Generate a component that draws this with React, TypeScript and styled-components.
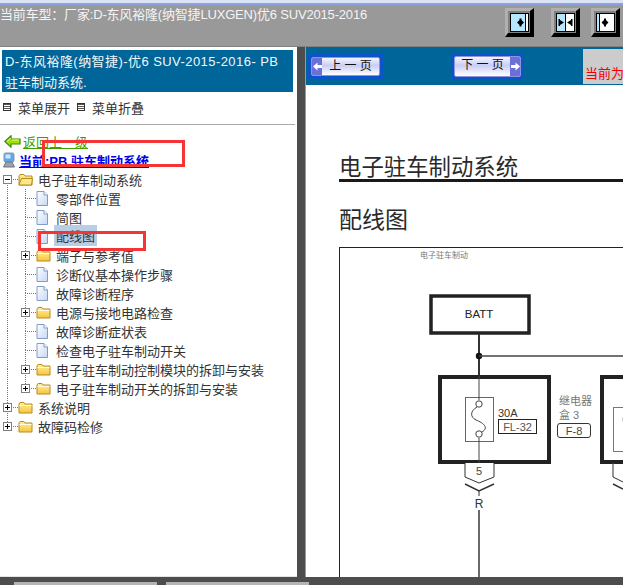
import React from "react";
import styled, { createGlobalStyle } from "styled-components";

const GlobalStyle = createGlobalStyle`
  html, body {
    margin: 0;
    padding: 0;
    overflow: hidden;
    background: #fff;
  }
`;

type TreeRow = {
  label: string;
  level: 0 | 1;
  kind: "file" | "open" | "closed";
  selected?: boolean;
  last?: boolean;
};

const rows: TreeRow[] = [
  { label: "电子驻车制动系统", level: 0, kind: "open" },
  { label: "零部件位置", level: 1, kind: "file" },
  { label: "简图", level: 1, kind: "file" },
  { label: "配线图", level: 1, kind: "file", selected: true },
  { label: "端子与参考值", level: 1, kind: "closed" },
  { label: "诊断仪基本操作步骤", level: 1, kind: "file" },
  { label: "故障诊断程序", level: 1, kind: "file" },
  { label: "电源与接地电路检查", level: 1, kind: "closed" },
  { label: "故障诊断症状表", level: 1, kind: "file" },
  { label: "检查电子驻车制动开关", level: 1, kind: "file" },
  { label: "电子驻车制动控制模块的拆卸与安装", level: 1, kind: "closed" },
  { label: "电子驻车制动开关的拆卸与安装", level: 1, kind: "closed", last: true },
  { label: "系统说明", level: 0, kind: "closed" },
  { label: "故障码检修", level: 0, kind: "closed", last: true },
];

function FolderIcon({ open }: { open: boolean }) {
  return (
    <FolderSvg viewBox="0 0 15 13">
      <defs>
        <linearGradient id="folderFill" x1="0" y1="0" x2="0" y2="1">
          <stop offset="0" stopColor="#fff0a0" />
          <stop offset="1" stopColor="#f5c63a" />
        </linearGradient>
      </defs>
      <path d="M1 3 L2 1.5 H6 L7 3 H14 V12 H1 Z" fill="url(#folderFill)" stroke="#b98a1e" />
      {open && <path d="M1 12 L3.5 5.5 H14.5 L13.5 12 Z" fill="#fde68c" stroke="#b98a1e" />}
      {!open && <path d="M1.5 4.5 H13.5" stroke="#fffbe0" />}
    </FolderSvg>
  );
}

function FileIcon() {
  return (
    <FileSvg viewBox="0 0 12 15">
      <defs>
        <linearGradient id="fileFill" x1="0" y1="0" x2="1" y2="1">
          <stop offset="0" stopColor="#ffffff" />
          <stop offset="1" stopColor="#c5d8f4" />
        </linearGradient>
      </defs>
      <path d="M1 .5 H8 L11.5 4 V14.5 H1 Z" fill="url(#fileFill)" stroke="#7f9cc8" />
      <path d="M8 .5 V4 H11.5" fill="#fff" stroke="#7f9cc8" />
    </FileSvg>
  );
}

function BackArrow() {
  return (
    <svg width="17" height="13" viewBox="0 0 17 13">
      <path
        d="M.8 6.5 L7 .8 V4 H16 V9 H7 V12.2 Z"
        fill="#9ee000"
        stroke="#3c8a00"
        strokeWidth="1.2"
      />
      <path d="M3 6.5 L7 3 M7.5 5 H15" stroke="#e4ff80" fill="none" />
    </svg>
  );
}

function ComputerIcon() {
  return (
    <svg width="14" height="17" viewBox="0 0 14 17">
      <rect x="2" y="1" width="10" height="9" rx="1.5" fill="#5aa8f0" stroke="#8d96a6" />
      <rect x="3.5" y="2.5" width="5" height="4" fill="#cfe8ff" />
      <path d="M4 10 L1.5 15 H12.5 L10 10 Z" fill="#9aa2ae" stroke="#70747c" />
    </svg>
  );
}

// both-way arrow head drawn around a centre x
const splitArrow = (x: number) =>
  `M${x - 1} 5.5 H${x + 1} V7 L${x + 3.5} 9.5 L${x + 1} 12 V13.5 H${x - 1} V12 L${x - 3.5} 9.5 L${x - 1} 7 Z`;

function ToolIcon({ variant }: { variant: 1 | 2 | 3 }) {
  return (
    <svg width="19" height="19" viewBox="0 0 19 19" style={{ display: "block" }}>
      <rect x=".5" y=".5" width="18" height="18" fill="#fff" stroke="#000" />
      {variant === 1 && (
        <>
          <rect x="1" y="1" width="14" height="17" fill="#b5e8ff" />
          <path d="M15.5 1 V18" stroke="#000" />
          <path d={splitArrow(10.5)} fill="#000" />
        </>
      )}
      {variant === 2 && (
        <>
          <rect x="1" y="1" width="8" height="17" fill="#b5e8ff" />
          <path d="M9.5 1 V18" stroke="#000" />
          <path
            d="M2.5 6 H4 V7 L8 9.5 L4 12 V13 H2.5 Z M16.5 6 H15 V7 L11 9.5 L15 12 V13 H16.5 Z"
            fill="#000"
          />
        </>
      )}
      {variant === 3 && (
        <>
          <rect x="1" y="1" width="2" height="17" fill="#b5e8ff" />
          <path d="M3.5 1 V18" stroke="#000" />
          <path d={splitArrow(9)} fill="#000" />
        </>
      )}
    </svg>
  );
}

function NavArrow({ right }: { right?: boolean }) {
  return (
    <svg width="9" height="9" viewBox="0 0 9 9">
      <path
        d={right ? "M9 4.5 L4.5 .5 V3 H0 V6 H4.5 V8.5 Z" : "M0 4.5 L4.5 .5 V3 H9 V6 H4.5 V8.5 Z"}
        fill="#fff"
      />
    </svg>
  );
}

function ExpanderGlyph({ open }: { open: boolean }) {
  return (
    <ExpanderSvg viewBox="0 0 9 9">
      <rect x=".5" y=".5" width="8" height="8" fill="#fff" stroke="#808080" />
      <path d={open ? "M2 4.5 H7" : "M2 4.5 H7 M4.5 2 V7"} stroke="#000" />
    </ExpanderSvg>
  );
}

function Diagram() {
  return (
    <DiagramSvg viewBox="339 247 284 330">
      <text x="420" y="258" fontSize="8" fill="#777">电子驻车制动</text>

      <rect x="431" y="296" width="98" height="37" fill="#fff" stroke="#222" strokeWidth="3.5" />
      <text x="479" y="318" fontSize="11.5" fill="#222" textAnchor="middle">BATT</text>
      <path d="M479 334 V376" stroke="#333" strokeWidth="2" />
      <circle cx="479" cy="356" r="3.2" fill="#111" />
      <path d="M479 356 H623" stroke="#444" strokeWidth="1.5" />

      <rect x="440" y="377" width="109" height="85" fill="#fff" stroke="#222" strokeWidth="4" />
      <rect x="465.5" y="397.5" width="28" height="44" fill="#fff" stroke="#666" />
      <path d="M479 376 V400 M479 438 V463" stroke="#444" />
      <circle cx="479" cy="404" r="3.2" fill="#fff" stroke="#444" />
      <circle cx="479" cy="434" r="3.2" fill="#fff" stroke="#444" />
      <path
        d="M477 407 C470 411 470 417 476 420 C484 423 489 428 482 432"
        fill="none"
        stroke="#444"
      />
      <text x="498" y="417" fontSize="11" fill="#333">30A</text>
      <rect x="498.5" y="419.5" width="38" height="14" fill="#fff" stroke="#222" />
      <text x="517.5" y="431" fontSize="11" fill="#555" textAnchor="middle">FL-32</text>

      <text x="559" y="405" fontSize="11" fill="#777">继电器</text>
      <text x="559" y="419" fontSize="11" fill="#777">盒 3</text>
      <rect x="557.5" y="423.5" width="33" height="14" rx="2.5" fill="#fff" stroke="#333" />
      <text x="574" y="435" fontSize="11" fill="#444" textAnchor="middle">F-8</text>

      <path d="M465 463 V477 L479 483 L494 477 V463" fill="#fff" stroke="#333" />
      <text x="479" y="474.5" fontSize="11" fill="#444" textAnchor="middle">5</text>
      <path d="M465 484 L479 491 L494 484" fill="none" stroke="#333" strokeWidth="1.5" />
      <path d="M479 491 V496" stroke="#333" />
      <text x="479" y="508" fontSize="12" fill="#333" textAnchor="middle">R</text>
      <path d="M479 510 V577" stroke="#444" strokeWidth="1.6" />

      <rect x="602" y="377" width="40" height="85" fill="#fff" stroke="#222" strokeWidth="4" />
      <rect x="613.5" y="407.5" width="30" height="44" fill="#fff" stroke="#777" />
      <path d="M627 413 C622 416 622 422 626 425" fill="none" stroke="#666" />
      <path d="M613 463 V477 L623 482" fill="#fff" stroke="#333" />
      <path d="M613 484 L623 489" fill="none" stroke="#333" strokeWidth="1.5" />
    </DiagramSvg>
  );
}

function App() {
  return (
    <Page>
      <GlobalStyle />
      <TitleStrip />
      <Toolbar>
        <CarTitle>当前车型：厂家:D-东风裕隆(纳智捷LUXGEN)优6 SUV2015-2016</CarTitle>
        <ToolButton $gap={0}>
          <ToolIcon variant={1} />
        </ToolButton>
        <ToolButton $gap={17}>
          <ToolIcon variant={2} />
        </ToolButton>
        <ToolButton $gap={11}>
          <ToolIcon variant={3} />
        </ToolButton>
      </Toolbar>

      <Main>
        <Sidebar>
          <SideTitle>
            <SideTitleLine>D-东风裕隆(纳智捷)-优6 SUV-2015-2016- PB</SideTitleLine>
            驻车制动系统.
          </SideTitle>
          <MenuRow>
            <MenuToggle />
            <MenuLabel>菜单展开</MenuLabel>
            <MenuToggle />
            <MenuLabel>菜单折叠</MenuLabel>
          </MenuRow>
          <Divider />
          <BackRow>
            <BackArrow />
            <BackLink>返回上一级</BackLink>
          </BackRow>
          <CurrentRow>
            <ComputerIcon />
            <CurrentLink>当前:PB 驻车制动系统</CurrentLink>
          </CurrentRow>
          <Tree>
            {rows.map((row) => (
              <Row key={row.label}>
                {row.level === 1 && <Guide $x={7} $up $down />}
                {row.kind === "file" ? (
                  <Guide $x={7} $up $down $branch />
                ) : (
                  <Guide
                    $x={7}
                    $up={row.level === 1 || row.label !== "电子驻车制动系统"}
                    $down={!row.last}
                    $branch
                  >
                    <ExpanderGlyph open={row.kind === "open"} />
                  </Guide>
                )}
                {row.kind === "file" ? <FileIcon /> : <FolderIcon open={row.kind === "open"} />}
                <RowLabel $selected={row.selected} $file={row.kind === "file"}>
                  {row.label}
                </RowLabel>
              </Row>
            ))}
          </Tree>
        </Sidebar>

        <Splitter />

        <Viewer>
          <ViewerBar>
            <NavFrame>
              <NavButton>
                <NavCap>
                  <NavArrow />
                </NavCap>
                <NavText>上 一 页</NavText>
              </NavButton>
            </NavFrame>
            <NavFrame $next>
              <NavButton>
                <NavText>下 一 页</NavText>
                <NavCap>
                  <NavArrow right />
                </NavCap>
              </NavButton>
            </NavFrame>
            <CurrentBox>当前为</CurrentBox>
          </ViewerBar>
          <Document>
            <DocTitle>电子驻车制动系统</DocTitle>
            <DocSubtitle>配线图</DocSubtitle>
            <DiagramFrame>
              <Diagram />
            </DiagramFrame>
          </Document>
        </Viewer>
      </Main>

      <BottomBar>
        <BottomTab />
        <BottomTab />
      </BottomBar>

      <RedMark $left={42} $top={140} $width={143} $height={27} />
      <RedMark $left={38} $top={231} $width={108} $height={20} />
    </Page>
  );
}

const Page = styled.div`
  position: relative;
  width: 623px;
  height: 585px;
  display: flex;
  flex-direction: column;
  overflow: hidden;
  font-family: "Liberation Sans", "Noto Sans CJK SC", sans-serif;
  font-size: 13px;
  color: #333;
`;

const TitleStrip = styled.div`
  height: 5px;
  flex-shrink: 0;
  background: linear-gradient(to bottom, #dbe3f7 0, #dbe3f7 3px, #8ea2dc 3px, #8ea2dc 5px);
`;

const Toolbar = styled.div`
  height: 41px;
  flex-shrink: 0;
  display: flex;
  align-items: flex-start;
  padding: 3px 3px 0 0;
  box-sizing: border-box;
  background: #999;
`;

const CarTitle = styled.div`
  flex: 1;
  color: #f4f4f4;
  line-height: 16px;
  margin-top: -1px;
  letter-spacing: -0.18px;
  white-space: nowrap;
`;

const ToolButton = styled.div<{ $gap: number }>`
  margin-left: ${(p) => p.$gap}px;
  border-style: solid;
  border-width: 3px 4px 4px 3px;
  border-color: #b0b0b0 #000 #000 #b0b0b0;
  padding: 2px 1px 1px 2px;
  background: #808080;
  flex-shrink: 0;
`;

const Main = styled.div`
  flex: 1;
  min-height: 0;
  display: flex;
  border-top: 1px solid #808080;
`;

const Sidebar = styled.div`
  width: 297px;
  flex-shrink: 0;
  box-sizing: border-box;
  padding-top: 3px;
  background: #fff;
  border-bottom: 1px solid #e4e4e4;
`;

const SideTitle = styled.div`
  margin: 0 4px 0 2px;
  padding: 1px 3px;
  height: 40px;
  background: #006699;
  color: #f2f7fb;
  line-height: 21px;
`;

const SideTitleLine = styled.div`
  letter-spacing: 0.44px;
  white-space: nowrap;
`;

const MenuRow = styled.div`
  display: flex;
  align-items: center;
  height: 18px;
  margin-top: 6px;
  padding-left: 3px;
`;

const MenuToggle = styled.span`
  width: 6px;
  height: 6px;
  flex-shrink: 0;
  border: 1px solid #333;
  background: repeating-linear-gradient(to bottom, #555 0 1px, #fff 1px 2px);
`;

const MenuLabel = styled.span`
  margin: 0 7px;
`;

const Divider = styled.div`
  height: 1px;
  margin: 8px 2px 8px 0;
  background: #aaa;
`;

const BackRow = styled.div`
  display: flex;
  align-items: center;
  height: 17px;
  padding-left: 4px;
`;

const BackLink = styled.span`
  margin-left: 2px;
  color: #3fa000;
  text-decoration: underline;
`;

const CurrentRow = styled.div`
  display: flex;
  align-items: center;
  height: 19px;
  margin-top: 1px;
  padding-left: 2px;
`;

const CurrentLink = styled.span`
  margin-left: 3px;
  color: #0000ee;
  font-weight: 700;
  text-decoration: underline;
`;

const Tree = styled.div`
  display: flex;
  flex-direction: column;
`;

const Row = styled.div`
  display: flex;
  align-items: center;
  height: 19px;
  white-space: nowrap;
`;

const Guide = styled.div<{ $x: number; $up?: boolean; $down?: boolean; $branch?: boolean }>`
  width: 18px;
  height: 19px;
  flex-shrink: 0;
  display: flex;
  align-items: center;
  background-repeat: no-repeat;
  background-image: ${(p) =>
      p.$up
        ? "repeating-linear-gradient(to bottom, #777 0 1px, transparent 1px 2px)"
        : "none"},
    ${(p) =>
      p.$down
        ? "repeating-linear-gradient(to bottom, #777 0 1px, transparent 1px 2px)"
        : "none"},
    ${(p) =>
      p.$branch
        ? "repeating-linear-gradient(to right, #777 0 1px, transparent 1px 2px)"
        : "none"};
  background-size: 1px 10px, 1px 10px, 11px 1px;
  background-position: ${(p) => p.$x}px 0, ${(p) => p.$x}px 9px, ${(p) => p.$x}px 9px;
`;

const ExpanderSvg = styled.svg`
  width: 9px;
  height: 9px;
  margin-left: 3px;
  flex-shrink: 0;
`;

const FolderSvg = styled.svg`
  width: 15px;
  height: 13px;
  flex-shrink: 0;
`;

const FileSvg = styled.svg`
  width: 12px;
  height: 15px;
  flex-shrink: 0;
`;

const RowLabel = styled.span<{ $selected?: boolean; $file: boolean }>`
  margin-left: ${(p) => (p.$file ? 6 : 3)}px;
  padding: 0 2px;
  ${(p) =>
    p.$selected &&
    `
    background: #b9cee6;
    line-height: 19px;
    padding-top: 2px;
    margin-top: -2px;
  `}
`;

const Splitter = styled.div`
  width: 8px;
  flex-shrink: 0;
  background: #4d4d4d;
  border-right: 1px solid #9a9a9a;
`;

const Viewer = styled.div`
  flex: 1;
  min-width: 0;
  display: flex;
  flex-direction: column;
  background: #fff;
`;

const ViewerBar = styled.div`
  height: 38px;
  flex-shrink: 0;
  display: flex;
  align-items: center;
  padding-left: 2px;
  background: #006699;
`;

const NavFrame = styled.div<{ $next?: boolean }>`
  width: ${(p) => (p.$next ? 73 : 75)}px;
  height: ${(p) => (p.$next ? 27 : 25)}px;
  margin-left: ${(p) => (p.$next ? 68 : 0)}px;
  box-sizing: border-box;
  padding: 3px;
  background: #0b55c6;
`;

const NavButton = styled.div`
  height: 100%;
  display: flex;
  align-items: stretch;
  overflow: hidden;
  border: 1px solid #8f94d8;
  border-radius: 2px;
  box-sizing: border-box;
  background: linear-gradient(to bottom, #f4f4ff 0, #c9cdf4 45%, #ffffff 100%);
`;

const NavCap = styled.span`
  width: 10px;
  display: flex;
  align-items: center;
  justify-content: center;
  background: #6a70d8;
`;

const NavText = styled.span`
  flex: 1;
  text-align: center;
  color: #111;
  font-size: 12px;
  line-height: 17px;
`;

const CurrentBox = styled.div`
  width: 40px;
  height: 35px;
  margin-left: auto;
  margin-top: 1px;
  box-sizing: border-box;
  padding: 17px 0 0 2px;
  background: #cccccc;
  color: #f00000;
  line-height: 16px;
  white-space: nowrap;
  overflow: hidden;
`;

const Document = styled.div`
  flex: 1;
  min-height: 0;
  display: flex;
  flex-direction: column;
  padding: 70px 0 0 33px;
  overflow: hidden;
`;

const DocTitle = styled.div`
  height: 24px;
  line-height: 25px;
  font-size: 22.4px;
  color: #2a2a2a;
  border-bottom: 3px solid #1a1a1a;
  white-space: nowrap;
`;

const DocSubtitle = styled.div`
  margin-top: 25px;
  line-height: 26px;
  font-size: 23px;
  color: #2a2a2a;
`;

const DiagramFrame = styled.div`
  flex: 1;
  min-height: 0;
  margin-top: 14px;
  border-top: 1px solid #222;
  border-left: 1px solid #222;
`;

const DiagramSvg = styled.svg`
  display: block;
  width: 284px;
  height: 330px;
  margin: -1px 0 0 -1px;
`;

const BottomBar = styled.div`
  height: 8px;
  flex-shrink: 0;
  display: flex;
  gap: 9px;
  padding: 5px 0 0 14px;
  box-sizing: border-box;
  background: #4d4d4d;
`;

const BottomTab = styled.div`
  width: 143px;
  height: 3px;
  background: #b4b4b4;
`;

const RedMark = styled.div<{ $left: number; $top: number; $width: number; $height: number }>`
  position: absolute;
  left: ${(p) => p.$left}px;
  top: ${(p) => p.$top}px;
  width: ${(p) => p.$width}px;
  height: ${(p) => p.$height}px;
  box-sizing: border-box;
  border: 3px solid #f53535;
`;

export default App;
